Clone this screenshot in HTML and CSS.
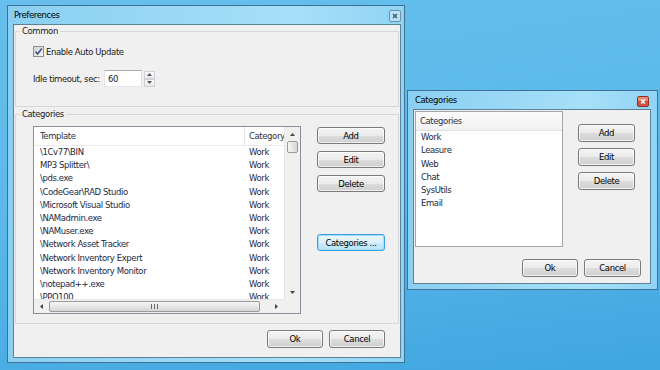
FILE: index.html
```html
<!DOCTYPE html>
<html>
<head>
<meta charset="utf-8">
<link rel="stylesheet" href="styles.css">
</head>
<body>
<div class="desktop">
  <div class="win prefs">
    <div class="titlebar">
      <span class="title">Preferences</span>
      <span class="close inactive"><svg width="12" height="12" viewBox="0 0 12 12"><rect x="0.5" y="0.5" width="11" height="11" rx="1.5" fill="#b6e3f7" stroke="#6c8fa4"/><path d="M4 4L8 8M8 4L4 8" stroke="#4d5c66" stroke-width="1.6"/></svg></span>
    </div>
    <div class="client">
      <fieldset class="group common">
        <legend>Common</legend>
        <div class="common-body">
          <div class="check">
            <span class="box"><svg width="9" height="9" viewBox="0 0 9 9"><path d="M1.5 4.5L3.6 7L7.8 1.5" fill="none" stroke="#3b4f86" stroke-width="1.5"/></svg></span>
            <span>Enable Auto Update</span>
          </div>
          <div class="field">
            <span class="field-label">Idle timeout, sec:</span>
            <span class="input">60</span>
            <span class="spin">
              <span><svg width="5" height="3" viewBox="0 0 5 3"><path d="M0 3L2.5 0L5 3Z" fill="#555"/></svg></span>
              <span><svg width="5" height="3" viewBox="0 0 5 3"><path d="M0 0L2.5 3L5 0Z" fill="#555"/></svg></span>
            </span>
          </div>
        </div>
      </fieldset>
      <fieldset class="group cats">
        <legend>Categories</legend>
        <div class="cats-body">
          <div class="listview">
            <div class="lv-content">
              <div class="lv-head"><span class="col1">Template</span><span class="col2">Category</span></div>
              <div class="row"><span class="col1">\1Cv77\BIN</span><span class="col2">Work</span></div>
              <div class="row"><span class="col1">MP3 Splitter\</span><span class="col2">Work</span></div>
              <div class="row"><span class="col1">\pds.exe</span><span class="col2">Work</span></div>
              <div class="row"><span class="col1">\CodeGear\RAD Studio</span><span class="col2">Work</span></div>
              <div class="row"><span class="col1">\Microsoft Visual Studio</span><span class="col2">Work</span></div>
              <div class="row"><span class="col1">\NAMadmin.exe</span><span class="col2">Work</span></div>
              <div class="row"><span class="col1">\NAMuser.exe</span><span class="col2">Work</span></div>
              <div class="row"><span class="col1">\Network Asset Tracker</span><span class="col2">Work</span></div>
              <div class="row"><span class="col1">\Network Inventory Expert</span><span class="col2">Work</span></div>
              <div class="row"><span class="col1">\Network Inventory Monitor</span><span class="col2">Work</span></div>
              <div class="row"><span class="col1">\notepad++.exe</span><span class="col2">Work</span></div>
              <div class="row"><span class="col1">\PPO100</span><span class="col2">Work</span></div>
            </div>
            <div class="vscroll">
              <span class="sb-btn"><svg width="5" height="3" viewBox="0 0 5 3"><path d="M0 3L2.5 0L5 3Z" fill="#444"/></svg></span>
              <span class="vthumb"></span>
              <span class="sb-space"></span>
              <span class="sb-btn"><svg width="5" height="3" viewBox="0 0 5 3"><path d="M0 0L2.5 3L5 0Z" fill="#444"/></svg></span>
            </div>
            <div class="hscroll">
              <span class="sb-btn h"><svg width="3" height="5" viewBox="0 0 3 5"><path d="M3 0L0 2.5L3 5Z" fill="#444"/></svg></span>
              <span class="hthumb"><svg width="7" height="5" viewBox="0 0 7 5"><path d="M0.5 0V5M3.5 0V5M6.5 0V5" stroke="#6a6a6a" stroke-width="1"/></svg></span>
              <span class="sb-space"></span>
              <span class="sb-btn h"><svg width="3" height="5" viewBox="0 0 3 5"><path d="M0 0L3 2.5L0 5Z" fill="#444"/></svg></span>
            </div>
            <div class="corner"></div>
          </div>
          <div class="btncol">
            <button class="btn">Add</button>
            <button class="btn">Edit</button>
            <button class="btn">Delete</button>
            <button class="btn focus cat-btn">Categories ...</button>
          </div>
        </div>
      </fieldset>
      <div class="footer">
        <button class="btn">Ok</button>
        <button class="btn">Cancel</button>
      </div>
    </div>
  </div>

  <div class="win catwin">
    <div class="titlebar">
      <span class="title">Categories</span>
      <span class="close red"><svg width="12" height="11" viewBox="0 0 12 11"><rect x="0.5" y="0.5" width="11" height="10" rx="1.5" fill="#d2533f" stroke="#8f3324"/><rect x="1" y="1" width="10" height="4" rx="1" fill="#e58b78"/><path d="M4.2 3.5L7.8 7.5M7.8 3.5L4.2 7.5" stroke="#fff" stroke-width="1.5"/></svg></span>
    </div>
    <div class="client">
      <div class="cat-body">
        <div class="listbox">
          <div class="lb-head">Categories</div>
          <div class="lb-row">Work</div>
          <div class="lb-row">Leasure</div>
          <div class="lb-row">Web</div>
          <div class="lb-row">Chat</div>
          <div class="lb-row">SysUtils</div>
          <div class="lb-row">Email</div>
        </div>
        <div class="cat-btns">
          <button class="btn">Add</button>
          <button class="btn">Edit</button>
          <button class="btn">Delete</button>
        </div>
      </div>
      <div class="cat-footer">
        <button class="btn ok">Ok</button>
        <button class="btn">Cancel</button>
      </div>
    </div>
  </div>
</div>
</body>
</html>
```
FILE: styles.css
```css
* { box-sizing: border-box; }
html, body { margin: 0; padding: 0; }
body {
  width: 660px;
  height: 370px;
  overflow: hidden;
  font-family: "DejaVu Sans", sans-serif;
  font-size: 8.5px;
  letter-spacing: -0.4px;
  color: #1a1a1a;
}
.desktop {
  position: relative;
  width: 660px;
  height: 370px;
  background: linear-gradient(172deg, #66bfed 0%, #5cb9ea 45%, #40a6e0 100%);
}
.win {
  position: absolute;
  display: flex;
  flex-direction: column;
  border: 1px solid #3f7192;
  background: linear-gradient(90deg, #8acff2 0%, #a6e0f8 72%, #90d3f4 100%);
}
.prefs { left: 7px; top: 5px; width: 398px; height: 358px; padding: 0 3px 4px 5px; }
.catwin { left: 407px; top: 90px; width: 251px; height: 200px; padding: 0 6px 5px 5px; }
.titlebar { display: flex; align-items: center; height: 18px; flex: none; }
.prefs .titlebar { padding-left: 1px; }
.catwin .titlebar { padding-left: 2px; }
.title { flex: 1; color: #000; }
.close { display: flex; flex: none; }
.close.inactive { align-self: flex-end; margin-bottom: 2px; }
.close.red { margin-top: 2px; margin-right: 2px; }
.client {
  flex: 1;
  border: 1px solid #5d8298;
  background: #f0f0f0;
  display: flex;
  flex-direction: column;
}

/* group boxes */
.group {
  margin: 0 1px;
  padding: 0;
  border: 1px solid #d3d8db;
  min-width: 0;
  flex: none;
}
.group legend {
  margin-left: 4px;
  padding: 0 2px;
  line-height: 12px;
  color: #1a1a1a;
}
.common { height: 82px; }
.cats { height: 216px; margin-top: 1px; }
.common-body {
  padding: 9px 0 0 17px;
  display: flex;
  flex-direction: column;
  align-items: flex-start;
}
.check { display: flex; align-items: center; height: 11px; gap: 2px; }
.box {
  width: 11px;
  height: 11px;
  border: 1px solid #8e8f8f;
  background: linear-gradient(135deg, #d6d6d6, #f4f4f4);
  display: flex;
  align-items: center;
  justify-content: center;
}
.field { display: flex; align-items: center; margin-top: 13px; height: 17px; }
.field-label { width: 71px; }
.input {
  width: 38px;
  height: 17px;
  border: 1px solid #abadb3;
  border-color: #abadb3 #dbdfe6 #e3e9ef #e2e3ea;
  background: #fff;
  padding-left: 3px;
  display: flex;
  align-items: center;
}
.spin { margin-left: 2px; width: 11px; height: 16px; display: flex; flex-direction: column; }
.spin span {
  flex: 1;
  border: 1px solid #cfd3d8;
  background: linear-gradient(#fbfbfb, #e9e9e9);
  display: flex;
  align-items: center;
  justify-content: center;
}

/* categories list view */
.cats-body { display: flex; padding: 6px 0 0 17px; align-items: flex-start; }
.listview {
  width: 268px;
  height: 188px;
  border: 1px solid #8a9099;
  background: #fff;
  display: grid;
  grid-template-columns: 1fr 16px;
  grid-template-rows: 1fr 14px;
  overflow: hidden;
}
.lv-content { overflow: hidden; grid-row: 1; grid-column: 1; color: #1d2840; }
.lv-head { display: flex; height: 19px; align-items: center; border-bottom: 1px solid #ececec; color: #2c3340; }
.col1 { width: 211px; flex: none; padding-left: 6px; white-space: nowrap; overflow: hidden; }
.col2 { padding-left: 4px; white-space: nowrap; }
.lv-head .col1 { border-right: 1px solid #e6e6e6; height: 19px; line-height: 19px; }
.row { display: flex; height: 13.2px; line-height: 13.2px; white-space: nowrap; }
.vscroll {
  grid-row: 1;
  grid-column: 2;
  background: #f0f0f0;
  border-left: 1px solid #e6e6e6;
  display: flex;
  flex-direction: column;
  align-items: center;
}
.sb-btn { height: 14px; width: 100%; flex: none; display: flex; align-items: center; justify-content: center; }
.sb-btn.h { width: 15px; height: 100%; }
.sb-space { flex: 1; }
.vthumb {
  width: 11px;
  height: 12px;
  flex: none;
  border: 1px solid #9b9b9b;
  border-radius: 2px;
  background: linear-gradient(90deg, #f6f6f6, #e7e7e7 50%, #d6d6d6);
}
.hscroll {
  grid-row: 2;
  grid-column: 1;
  background: #f0f0f0;
  border-top: 1px solid #e6e6e6;
  display: flex;
  align-items: center;
}
.hthumb {
  width: 211px;
  height: 11px;
  flex: none;
  border: 1px solid #9b9b9b;
  border-radius: 2px;
  background: linear-gradient(#f6f6f6, #e7e7e7 50%, #d6d6d6);
  display: flex;
  align-items: center;
  justify-content: center;
}
.corner { grid-row: 2; grid-column: 2; background: #f0f0f0; }

/* buttons */
.btn {
  font: inherit;
  letter-spacing: inherit;
  color: #000;
  padding: 0;
  margin: 0;
  border: 1px solid #7a7a7a;
  border-radius: 3px;
  background: linear-gradient(#f3f3f3 0%, #ebebeb 50%, #dddddd 51%, #cfcfcf 100%);
  box-shadow: inset 0 0 0 1px rgba(255, 255, 255, 0.7);
  display: flex;
  align-items: center;
  justify-content: center;
}
.btn.focus {
  border-color: #3a9fdd;
  background: linear-gradient(#eaf6fd 0%, #dcf1fc 50%, #c9ebfd 51%, #b9e2f8 100%);
  box-shadow: inset 0 0 0 1px #a6dcf7;
}
.btncol { display: flex; flex-direction: column; margin-left: 16px; padding-top: 1px; }
.btncol .btn { width: 68px; height: 17px; }
.btncol .btn + .btn { margin-top: 7px; }
.btncol .btn.cat-btn { margin-top: 42px; }
.footer { display: flex; justify-content: flex-end; gap: 6px; padding-right: 15px; margin-top: 6px; }
.footer .btn { width: 56px; height: 18px; }

/* categories window */
.cat-body { display: flex; padding: 1px 0 0 1px; align-items: flex-start; }
.listbox { width: 148px; height: 136px; border: 1px solid #a0a6ae; background: #fff; color: #1d2840; }
.lb-head {
  height: 19px;
  line-height: 18px;
  padding-left: 4px;
  background: linear-gradient(#fbfbfb, #f1f1f1);
  border-bottom: 1px solid #e3e3e3;
  color: #2c3340;
}
.lb-row { height: 13.3px; line-height: 13.3px; padding-left: 5px; }
.cat-btns { display: flex; flex-direction: column; margin-left: 15px; padding-top: 13px; }
.cat-btns .btn { width: 57px; height: 18px; }
.cat-btns .btn + .btn { margin-top: 6px; }
.cat-footer { display: flex; justify-content: flex-end; gap: 6px; padding-right: 9px; margin-top: 12px; }
.cat-footer .btn { width: 57px; height: 18px; }
.cat-footer .btn.ok { width: 56px; }
```
